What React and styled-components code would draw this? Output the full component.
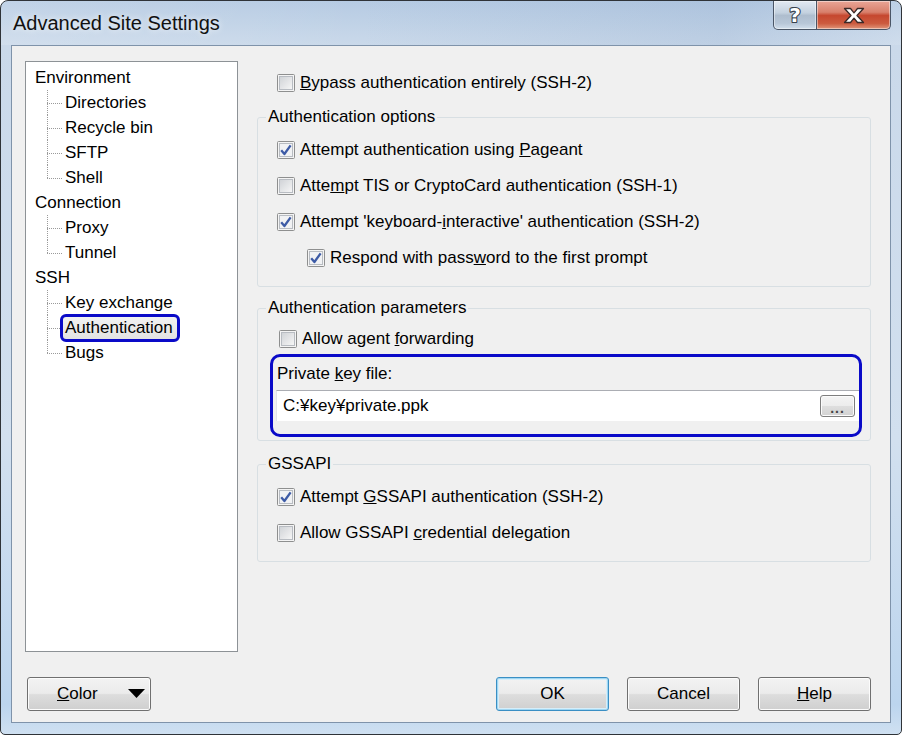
import React from 'react'
import styled, { createGlobalStyle } from 'styled-components'

const Global = createGlobalStyle`
  html, body {
    margin: 0;
    padding: 0;
    background: #ffffff;
  }
  body {
    font-family: 'Liberation Sans', Arial, sans-serif;
    font-size: 17px;
    color: #000;
  }
  * { box-sizing: border-box; }
`

const Window = styled.div`
  width: 902px;
  height: 735px;
  border: 1px solid #2f3338;
  border-radius: 8px 8px 5px 5px;
  background: linear-gradient(180deg, #b6cbe3 0%, #cad9ea 6%, #d2e0ef 60%, #bcd5ee 96%, #cfe0f1 100%);
  display: flex;
  flex-direction: column;
  overflow: hidden;
`

const TitleBar = styled.div`
  height: 44px;
  display: flex;
  align-items: flex-start;
  padding: 0 10px 0 12px;
  background: linear-gradient(90deg, rgba(255,255,255,0.15) 0%, rgba(255,255,255,0) 40%, rgba(120,150,190,0.15) 80%, rgba(255,255,255,0.1) 100%);
`

const Title = styled.div`
  flex: 1;
  font-size: 20px;
  line-height: 44px;
  color: #111;
  text-shadow: 0 0 6px rgba(255, 255, 255, 0.9);
`

const CapButtons = styled.div`
  display: flex;
  height: 29px;
`

const CapButton = styled.div`
  width: ${p => p.$w}px;
  height: 29px;
  border: 1px solid #4a5566;
  border-top: none;
  border-left-width: ${p => (p.$close ? 0 : 1)}px;
  border-radius: ${p => (p.$close ? '0 0 5px 0' : '0 0 0 5px')};
  background: ${p =>
    p.$close
      ? 'linear-gradient(180deg, #e9a596 0%, #d8806c 40%, #c6472f 52%, #cc5b3f 80%, #e0957a 100%)'
      : 'linear-gradient(180deg, #e2e9f2 0%, #c4d1df 42%, #aebdce 52%, #b8c7d8 80%, #d2dfec 100%)'};
  box-shadow: inset 0 0 0 1px rgba(255, 255, 255, 0.45);
  display: flex;
  align-items: center;
  justify-content: center;
`

const Client = styled.div`
  flex: 1;
  margin: 0 10px 11px 10px;
  border: 1px solid #7f93aa;
  background: #f0f0f0;
  padding: 15px 19px 11px 13px;
  display: flex;
  flex-direction: column;
`

const Body = styled.div`
  height: 591px;
  display: flex;
  gap: 19px;
`

const Tree = styled.div`
  width: 213px;
  height: 591px;
  border: 1px solid #8d9296;
  background: #fff;
  padding: 3px 0 0 9px;
`

const NodeLabel = styled.div`
  height: 25px;
  line-height: 25px;
`

const ChildItem = styled.div`
  position: relative;
  height: 25px;
  padding-left: 30px;
  display: flex;
  align-items: center;

  &::before {
    content: '';
    position: absolute;
    left: 12px;
    top: 0;
    height: ${p => (p.$last ? '50%' : '100%')};
    border-left: 1px dotted #9a9a9a;
  }
  &::after {
    content: '';
    position: absolute;
    left: 12px;
    top: 50%;
    width: 15px;
    border-top: 1px dotted #9a9a9a;
  }
`

const ChildLabel = styled.span`
  line-height: 22px;
  white-space: nowrap;
  ${p =>
    p.$selected &&
    `
    margin-left: -5px;
    padding: 0 4px 0 2px;
    border: 3px solid #0a0ac8;
    border-radius: 6px;
    background: linear-gradient(180deg, #f2f2f2, #e2e2e2);
    position: relative;
    z-index: 1;
  `}
`

const Panel = styled.div`
  flex: 1;
  display: flex;
  flex-direction: column;
  padding-top: 4px;
`

const CheckRow = styled.div`
  height: ${p => p.$h || 36}px;
  display: flex;
  align-items: center;
  gap: 5px;
  padding-left: ${p => p.$indent || 0}px;
  white-space: nowrap;
`

const Group = styled.fieldset`
  margin: ${p => p.$mt}px 0 0 0;
  border: 1px solid #d8dfe3;
  border-radius: 3px;
  padding: ${p => p.$pt}px 0 ${p => p.$pb}px 0;
  min-width: 0;
`

const Legend = styled.legend`
  margin-left: 8px;
  padding: 0 2px;
  line-height: 20px;
`

const KeyBox = styled.div`
  margin: 0 8px 0 12px;
  height: 83px;
  border: 3px solid #0a0ac8;
  border-radius: 10px;
  padding: 6px 0 13px 3px;
  display: flex;
  flex-direction: column;
`

const FieldLabel = styled.div`
  line-height: 22px;
  padding-left: 1px;
`

const FileField = styled.div`
  margin-top: 5px;
  height: 31px;
  background: #fff;
  border-top: 1px solid #abadb3;
  border-left: 1px solid #e2e3ea;
  display: flex;
  align-items: center;
  padding: 0 4px 0 6px;
`

const FileText = styled.div`
  flex: 1;
`

const BrowseButton = styled.div`
  width: 35px;
  height: 22px;
  border: 1px solid #7e7e7e;
  border-radius: 3px;
  background: linear-gradient(180deg, #f4f4f4 0%, #ececec 50%, #dedede 52%, #d2d2d2 100%);
  box-shadow: inset 0 0 0 1px #fbfbfb;
  font-size: 14px;
  font-weight: bold;
  line-height: 24px;
  text-align: center;
  letter-spacing: 1px;
  color: #444;
`

const Footer = styled.div`
  margin-top: 25px;
  height: 34px;
  display: flex;
  align-items: center;
  gap: 18px;
`

const PushButton = styled.div`
  width: ${p => p.$w || 113}px;
  height: 34px;
  border: 1px solid ${p => (p.$default ? '#3a8fc4' : '#707070')};
  border-radius: 3px;
  background: linear-gradient(180deg, #f3f3f3 0%, #ebebeb 48%, #dddddd 52%, #cfcfcf 100%);
  box-shadow: ${p =>
    p.$default
      ? 'inset 0 0 0 1px #9fd6f2, inset 0 0 0 2px #d6eefa'
      : 'inset 0 0 0 1px #fcfcfc'};
  display: flex;
  align-items: center;
  justify-content: center;
  color: #000;
`

const ColorButton = styled(PushButton)`
  margin-left: 2px;
  margin-right: auto;
  justify-content: space-between;
  padding: 0 5px 0 29px;
`

const CheckSvg = styled.svg`
  flex: none;
  display: block;
`

const Check = ({ on }) => (
  <CheckSvg width="18" height="18" viewBox="0 0 18 18">
    <defs>
      <linearGradient id="cbIn" x1="0" y1="0" x2="1" y2="1">
        <stop offset="0" stopColor="#cfd2d6" />
        <stop offset="1" stopColor="#f7f7f7" />
      </linearGradient>
    </defs>
    <rect x="0.5" y="0.5" width="17" height="17" rx="1" fill="#f4f4f4" stroke="#8e8f8f" />
    <rect x="2.5" y="2.5" width="13" height="13" fill={on ? '#f1f2f4' : 'url(#cbIn)'} stroke="#b8bcc2" />
    {on && (
      <path
        d="M4.2 9.2 L7.4 13 L13.6 4.4"
        fill="none"
        stroke="#3d5ba6"
        strokeWidth="2.3"
        strokeLinejoin="round"
      />
    )}
  </CheckSvg>
)

const Row = ({ on, indent, h, children }) => (
  <CheckRow $indent={indent} $h={h}>
    <Check on={on} />
    <span>{children}</span>
  </CheckRow>
)

const tree = [
  { name: 'Environment', kids: ['Directories', 'Recycle bin', 'SFTP', 'Shell'] },
  { name: 'Connection', kids: ['Proxy', 'Tunnel'] },
  { name: 'SSH', kids: ['Key exchange', 'Authentication', 'Bugs'] },
]

const Triangle = () => (
  <svg width="17" height="10" viewBox="0 0 17 10">
    <polygon points="0,0 17,0 8.5,9" fill="#000" />
  </svg>
)

export default function App() {
  return (
    <>
      <Global />
      <Window>
        <TitleBar>
          <Title>Advanced Site Settings</Title>
          <CapButtons>
            <CapButton $w={44}>
              <svg width="20" height="24" viewBox="0 0 20 24">
                <text
                  x="10"
                  y="19"
                  textAnchor="middle"
                  fontFamily="'DejaVu Sans', sans-serif"
                  fontWeight="bold"
                  fontSize="20"
                  fill="#fff"
                  stroke="#38414d"
                  strokeWidth="2.2"
                  paintOrder="stroke"
                  strokeLinejoin="round"
                >
                  ?
                </text>
              </svg>
            </CapButton>
            <CapButton $w={74} $close>
              <svg width="22" height="17" viewBox="0 0 22 17">
                <path
                  d="M1.5 1.5 H7.5 L11 5.8 L14.5 1.5 H20.5 L14 8.5 L20.5 15.5 H14.5 L11 11.2 L7.5 15.5 H1.5 L8 8.5 Z"
                  fill="#fff"
                  stroke="#3b2a28"
                  strokeWidth="1.3"
                  strokeLinejoin="round"
                />
              </svg>
            </CapButton>
          </CapButtons>
        </TitleBar>
        <Client>
          <Body>
            <Tree>
              {tree.map(n => (
                <div key={n.name}>
                  <NodeLabel>{n.name}</NodeLabel>
                  {n.kids.map((k, i) => (
                    <ChildItem key={k} $last={i === n.kids.length - 1}>
                      <ChildLabel $selected={k === 'Authentication'}>{k}</ChildLabel>
                    </ChildItem>
                  ))}
                </div>
              ))}
            </Tree>
            <Panel>
              <Row indent={20}>
                <u>B</u>ypass authentication entirely (SSH-2)
              </Row>
              <Group $mt={6} $pt={5} $pb={10}>
                <Legend>Authentication options</Legend>
                <Row on indent={19}>
                  Attempt authentication using <u>P</u>ageant
                </Row>
                <Row indent={19}>
                  Atte<u>m</u>pt TIS or CryptoCard authentication (SSH-1)
                </Row>
                <Row on indent={19}>
                  Attempt 'keyboard-<u>i</u>nteractive' authentication (SSH-2)
                </Row>
                <Row on indent={49}>
                  Respond with pass<u>w</u>ord to the first prompt
                </Row>
              </Group>
              <Group $mt={11} $pt={6} $pb={3}>
                <Legend>Authentication parameters</Legend>
                <Row indent={21} h={30}>
                  Allow agent <u>f</u>orwarding
                </Row>
                <KeyBox>
                  <FieldLabel>
                    Private <u>k</u>ey file:
                  </FieldLabel>
                  <FileField>
                    <FileText>C:¥key¥private.ppk</FileText>
                    <BrowseButton>...</BrowseButton>
                  </FileField>
                </KeyBox>
              </Group>
              <Group $mt={13} $pt={5} $pb={10}>
                <Legend>GSSAPI</Legend>
                <Row on indent={19}>
                  Attempt <u>G</u>SSAPI authentication (SSH-2)
                </Row>
                <Row indent={19}>
                  Allow GSSAPI <u>c</u>redential delegation
                </Row>
              </Group>
            </Panel>
          </Body>
          <Footer>
            <ColorButton $w={124}>
              <span>
                <u>C</u>olor
              </span>
              <Triangle />
            </ColorButton>
            <PushButton $default>OK</PushButton>
            <PushButton>Cancel</PushButton>
            <PushButton>
              <u>H</u>elp
            </PushButton>
          </Footer>
        </Client>
      </Window>
    </>
  )
}
